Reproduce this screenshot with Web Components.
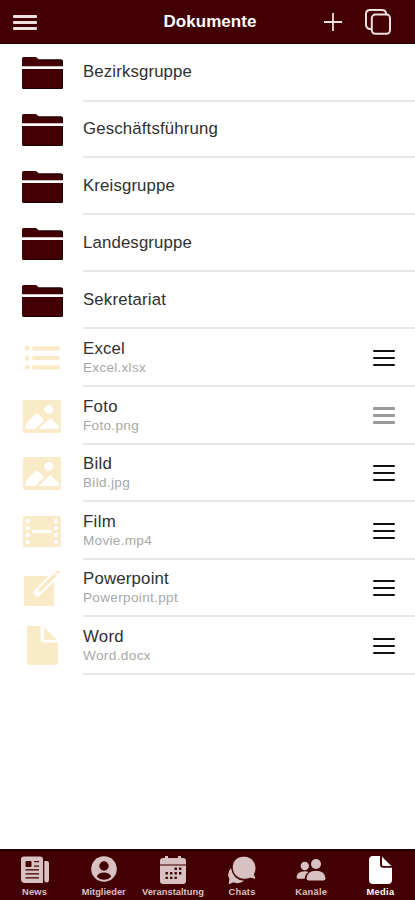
<!DOCTYPE html>
<html lang="de"><head><meta charset="utf-8"><title>Dokumente</title>
<style>html,body{margin:0;height:100%;background:#fff;overflow:hidden}body{font-family:"Liberation Sans",Arial,sans-serif}</style></head>
<body><documents-app></documents-app>
<script>
const ICONS={
menu:[24,16,'<g fill="currentColor"><rect y="0" width="24" height="3" rx="1"/><rect y="6" width="24" height="3" rx="1"/><rect y="12" width="24" height="3" rx="1"/></g>'],
plus:[18,18,'<path d="M9 0v18M0 9h18" stroke="currentColor" stroke-width="1.8"/>'],
copy:[26,26,'<g fill="none" stroke="currentColor" stroke-width="2"><rect x="6.8" y="5.6" width="18.2" height="19.2" rx="3.5"/><path d="M6 20H4.5Q1 19 1 15.5V5Q1 1 5 1h12q3.8 0 4.3 4"/></g>'],
folder:[41,32,'<path d="M1.5 0H14l3 2.5h22q2 0 2 2V9.3H0V1.5Q0 0 1.5 0zM0 12h41v18.5q0 1.5-1.5 1.5h-38Q0 32 0 30.5z" fill="#430004"/><path d="M17 3h22q1.5 0 1.5 2v4M40.5 12v18.5q0 1-1.5 1H1" fill="none" stroke="#160002"/>'],
list:[35,24,'<g fill="currentColor"><circle cx="2.3" cy="2.3" r="2.4"/><circle cx="2.3" cy="12" r="2.4"/><circle cx="2.3" cy="21.4" r="2.4"/><rect x="7" y=".2" width="28" height="4.2" rx="2"/><rect x="7" y="9.9" width="28" height="4.2" rx="2"/><rect x="7" y="19.3" width="28" height="4.2" rx="2"/></g>'],
image:[38,33,'<rect width="38" height="33" rx="2" fill="currentColor"/><g fill="#fff"><circle cx="25.7" cy="9.5" r="4.4"/><path d="M2.5 29v-4.5L12.5 14q1.2-1 2.4 0l6.3 6.1L12.3 29zM15.5 29l10.6-9.8q1.3-1.2 2.7 0L36 26v3z"/></g>'],
film:[38,31,'<rect width="38" height="31" rx="1.5" fill="currentColor"/><g fill="#fff"><rect x="9" y="14" width="20" height="3" rx="1"/><rect x="2.7" y="3.1" width="4" height="4" rx="1.2"/><rect x="2.7" y="10" width="4" height="4" rx="1.2"/><rect x="2.7" y="17" width="4" height="4" rx="1.2"/><rect x="2.7" y="24" width="4" height="4" rx="1.2"/><rect x="31" y="3.1" width="4" height="4" rx="1.2"/><rect x="31" y="10" width="4" height="4" rx="1.2"/><rect x="31" y="17" width="4" height="4" rx="1.2"/><rect x="31" y="24" width="4" height="4" rx="1.2"/></g>'],
edit:[36,36,'<rect y="6" width="30" height="30" rx="1.5" fill="currentColor"/><path d="M13.5 22.5L31 5" stroke="#fff" stroke-width="7.5" stroke-linecap="round"/><path d="M14 22l1-3.8L30.5 3l2.5 2.7L17.8 21z" fill="currentColor"/><path d="M32 2l2-1.5 1.5 1.5L34.3 4z" fill="currentColor" stroke="currentColor" stroke-linejoin="round"/>'],
doc:[31,39,'<path d="M2 0h11.5v13q0 3.5 3.5 3.5h14V37q0 2-2 2H2q-2 0-2-2V2Q0 0 2 0zM17 1l13 13H18q-1 0-1-1z" fill="currentColor"/>'],
news:[28,28,'<path d="M3 .5h16Q22 .5 22 3v24H4q-4 0-4-4V3Q0 .5 3 .5zM23.3 5H26q2 0 2 2v16.5q0 3-2.4 3-2.3 0-2.3-3z" fill="currentColor"/><g fill="#430003"><rect x="4.5" y="5" width="6" height="6" rx="1"/><rect x="13" y="5" width="5" height="1.2"/><rect x="13" y="9.5" width="5" height="1.2"/><rect x="4.5" y="13.2" width="13.5" height="1.3"/><rect x="4.5" y="17.2" width="13.5" height="1.3"/><rect x="4.5" y="21.2" width="13.5" height="1.3"/></g>'],
person:[26,27,'<circle cx="13" cy="13" r="12.8" fill="currentColor"/><circle cx="13" cy="10" r="4.7" fill="#430003"/><path d="M5.7 20.5q2-4 7.3-4t7.3 4q-3 3.2-7.3 3.2t-7.3-3.2z" fill="#430003"/>'],
calendar:[28,28,'<path d="M1 9.5h26V25q0 3-3 3H4q-3 0-3-3zM4 2h2V0h3v2h10V0h3v2h2q3 0 3 3v3H1V5q0-3 3-3z" fill="currentColor"/><path d="M1 8h26v1.5H1z" fill="#8a5a5c"/><g fill="#430003"><path d="M15.5 11.5h2.4v2.4h-2.4zM20 11.5h2.4v2.4H20zM6.5 16h2.4v2.4H6.5zM11 16h2.4v2.4H11zM15.5 16h2.4v2.4h-2.4zM20 16h2.4v2.4H20zM6.5 20.7h2.4v2.4H6.5zM11 20.7h2.4v2.4H11zM15.5 20.7h2.4v2.4h-2.4z"/></g>'],
chat:[28,28,'<path d="M3 12Q-2 18 1.5 23l-.8 4q0 1.3 1.4.8l3.7-1.5q5.5 2.3 10.2-1.5Q5 24 3 12z" fill="currentColor"/><path d="M16 .2C9 .2 4.3 5 4.3 11.4c0 7.2 6.2 12.2 13 11.8 2 0 3.6-.5 5.2-1.2l4 1.2q1.5.2 1-1.3l-1.2-3.6C31 10 25 .2 16 .2z" fill="currentColor" stroke="#430003" stroke-width=".9"/>'],
people:[30,22,'<g fill="currentColor"><circle cx="20" cy="5" r="5"/><path d="M10.5 19.5q.5-7.7 9.5-7.7t9.5 7.7q0 2-2 2h-15q-2 0-2-2z"/><circle cx="8.8" cy="7" r="4.2"/><path d="M.5 18.3q.5-6 8.3-6 2.2 0 3.7.7Q9 15.3 8.7 19.7H2q-1.5 0-1.5-1.4z"/></g>'],
media:[23,28,'<path d="M4 0h7v8.5q0 3.3 3.3 3.3H23V24q0 4-4 4H4q-4 0-4-4V4Q0 0 4 0zM13 .7L22.3 10h-7.8Q13 10 13 8.5z" fill="currentColor"/>']
};
class UiIcon extends HTMLElement{connectedCallback(){
 const [w,h,b]=ICONS[this.getAttribute('name')];
 this.attachShadow({mode:'open'}).innerHTML=`<style>:host{display:block;flex:none}svg{display:block}</style><svg width="${w}" height="${h}" viewBox="0 0 ${w} ${h}">${b}</svg>`;}}
customElements.define('ui-icon',UiIcon);

/* Spreads a label over a given width by letter spacing. */
class FitLabel extends HTMLElement{connectedCallback(){
 const t=this.getAttribute('text');
 this.attachShadow({mode:'open'}).innerHTML=`<style>:host{display:block;white-space:nowrap}span{display:inline-block}</style><span>${t}</span>`;
 const s=this.shadowRoot.querySelector('span');
 s.style.letterSpacing=(this.getAttribute('fit')-s.getBoundingClientRect().width)/t.length+'px';}}
customElements.define('fit-label',FitLabel);

class DragHandle extends HTMLElement{connectedCallback(){
 this.attachShadow({mode:'open'}).innerHTML=`<style>:host{display:flex;flex-direction:column;justify-content:space-between;width:22px;height:16px;color:#111;padding-top:1px}:host([muted]){color:#9b9b9b;height:17px;padding:0}i{height:2px;background:currentColor;border-radius:1px}:host([muted]) i{height:3px}</style><i></i><i></i><i></i>`;}}
customElements.define('drag-handle',DragHandle);

class DocRow extends HTMLElement{connectedCallback(){
 const a=n=>this.getAttribute(n),sub=a('sub');
 this.attachShadow({mode:'open'}).innerHTML=`<style>
 :host{display:grid;grid-template-columns:83px 1fr;height:${a('h')}px}
 .icon{display:flex;justify-content:center;align-items:center;color:#f9eac8;padding:0 0 ${a('lift')||0}px 1px}
 .body{display:flex;justify-content:space-between;align-items:center;border-bottom:2px solid #e7e7e7;padding-right:20px}
 .title{font-size:16.8px;line-height:19px;color:#303030}
 .sub{font-size:13.6px;line-height:17px;margin-top:1px;color:#a8a8a8}
 .folder{padding-bottom:1px}
 </style><div class="icon"><ui-icon name="${a('icon')}"></ui-icon></div>
 <div class="body"><div class="${sub?'':'folder'}"><fit-label class="title" text="${a('label')}" fit="${a('fit')}"></fit-label>${sub?`<fit-label class="sub" text="${sub}" fit="${a('subfit')}"></fit-label>`:''}</div>${sub?`<drag-handle ${this.hasAttribute('muted')?'muted':''}></drag-handle>`:''}</div>`;}}
customElements.define('doc-row',DocRow);

class TitleBar extends HTMLElement{connectedCallback(){
 this.attachShadow({mode:'open'}).innerHTML=`<style>:host{display:grid;grid-template-columns:1fr auto 1fr;align-items:center;height:44px;box-sizing:border-box;border-bottom:1px solid #160001;background:#430003;color:#eee0e0;padding:1px 24px 0 13px}
 .left{padding:2px 0 0}.title{font-size:17px;font-weight:bold;color:#fff;line-height:20px;padding-left:16px}.right{display:flex;gap:23px;align-items:center;justify-content:flex-end}</style>
 <div class="left"><ui-icon name="menu"></ui-icon></div><fit-label class="title" text="Dokumente" fit="93"></fit-label><div class="right"><ui-icon name="plus"></ui-icon><ui-icon name="copy"></ui-icon></div>`;}}
customElements.define('title-bar',TitleBar);

class TabItem extends HTMLElement{connectedCallback(){
 const a=n=>this.getAttribute(n);
 this.attachShadow({mode:'open'}).innerHTML=`<style>:host{display:flex;flex-direction:column;align-items:center;color:#d8c1c2}:host([active]){color:#fff}
 .pic{height:29px;display:flex;align-items:center}.name{font-size:9.3px;font-weight:bold;line-height:10px;margin-top:3px}</style>
 <div class="pic"><ui-icon name="${a('icon')}"></ui-icon></div><fit-label class="name" text="${a('label')}" fit="${a('fit')}"></fit-label>`;}}
customElements.define('tab-item',TabItem);

class TabBar extends HTMLElement{connectedCallback(){
 this.attachShadow({mode:'open'}).innerHTML=`<style>:host{display:grid;grid-template-columns:repeat(6,1fr);height:51px;box-sizing:border-box;border-top:2px solid #210002;background:#430003;padding-top:4px}</style>
 <tab-item icon="news" label="News" fit="25"></tab-item><tab-item icon="person" label="Mitglieder" fit="44"></tab-item><tab-item icon="calendar" label="Veranstaltung" fit="62"></tab-item><tab-item icon="chat" label="Chats" fit="27"></tab-item><tab-item icon="people" label="Kanäle" fit="32"></tab-item><tab-item icon="media" label="Media" fit="28" active></tab-item>`;}}
customElements.define('tab-bar',TabBar);

class DocumentsApp extends HTMLElement{connectedCallback(){
 this.attachShadow({mode:'open'}).innerHTML=`<style>:host{display:flex;flex-direction:column;height:100vh}main{flex:1;min-height:0}</style>
 <title-bar></title-bar><main>
 <doc-row h="58" icon="folder" label="Bezirksgruppe" fit="109"></doc-row>
 <doc-row h="56" icon="folder" label="Geschäftsführung" fit="135"></doc-row>
 <doc-row h="57" icon="folder" label="Kreisgruppe" fit="92"></doc-row>
 <doc-row h="57" icon="folder" label="Landesgruppe" fit="109"></doc-row>
 <doc-row h="57" icon="folder" label="Sekretariat" fit="83"></doc-row>
 <doc-row h="58" icon="list" label="Excel" fit="42" sub="Excel.xlsx" subfit="63"></doc-row>
 <doc-row h="58" icon="image" label="Foto" fit="35" sub="Foto.png" subfit="56" muted></doc-row>
 <doc-row h="57" icon="image" lift="1" label="Bild" fit="29" sub="Bild.jpg" subfit="47"></doc-row>
 <doc-row h="58" icon="film" label="Film" fit="33" sub="Movie.mp4" subfit="69"></doc-row>
 <doc-row h="57" icon="edit" lift="1" label="Powerpoint" fit="86" sub="Powerpoint.ppt" subfit="95"></doc-row>
 <doc-row h="58" icon="doc" lift="1" label="Word" fit="41" sub="Word.docx" subfit="68"></doc-row>
 </main><tab-bar></tab-bar>`;}}
customElements.define('documents-app',DocumentsApp);
</script></body></html>
